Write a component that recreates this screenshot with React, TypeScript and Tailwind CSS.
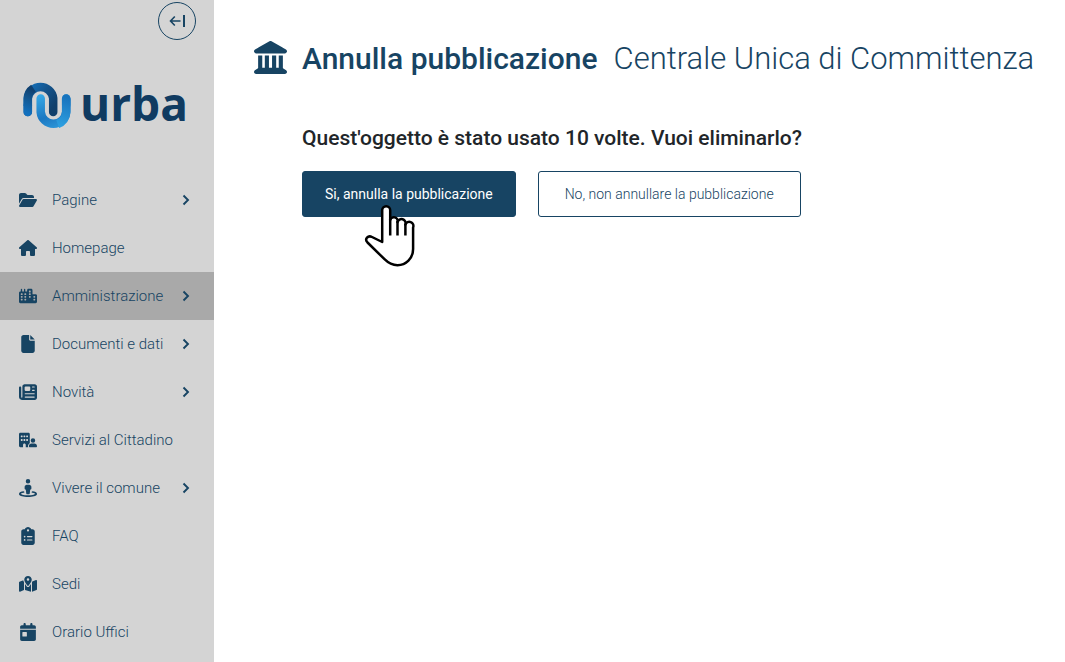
import type { ComponentType } from 'react'
import { clsx } from 'clsx'
import {
  FaBuildingUser,
  FaCalendarDay,
  FaCity,
  FaClipboardList,
  FaFile,
  FaFolderOpen,
  FaHouse,
  FaLandmark,
  FaMapLocationDot,
  FaNewspaper,
  FaStreetView,
} from 'react-icons/fa6'

interface NavItem {
  label: string
  icon: ComponentType<{ className?: string }>
  expandable?: boolean
  active?: boolean
}

const navItems: NavItem[] = [
  { label: 'Pagine', icon: FaFolderOpen, expandable: true },
  { label: 'Homepage', icon: FaHouse },
  { label: 'Amministrazione', icon: FaCity, expandable: true, active: true },
  { label: 'Documenti e dati', icon: FaFile, expandable: true },
  { label: 'Novità', icon: FaNewspaper, expandable: true },
  { label: 'Servizi al Cittadino', icon: FaBuildingUser },
  { label: 'Vivere il comune', icon: FaStreetView, expandable: true },
  { label: 'FAQ', icon: FaClipboardList },
  { label: 'Sedi', icon: FaMapLocationDot },
  { label: 'Orario Uffici', icon: FaCalendarDay },
]

export default function App() {
  return (
    <div className="flex min-h-screen bg-white font-['Roboto',sans-serif] text-[#174463]">
      <Sidebar />
      <main className="min-w-0 flex-1 pt-9 pl-10">
        <h1 className="flex items-center text-[31px] leading-[46px]">
          <FaLandmark className="mr-[15px] mb-1 size-[33px] shrink-0" />
          <span className="text-[30px] font-medium whitespace-nowrap">Annulla pubblicazione</span>
          <span className="ml-4 font-light whitespace-nowrap">Centrale Unica di Committenza</span>
        </h1>
        <div className="mt-10 ml-12">
          <h2 className="text-[21px] leading-8 font-medium text-[#212529]">
            Quest'oggetto è stato usato 10 volte. Vuoi eliminarlo?
          </h2>
          <div className="mt-[17px] flex gap-[22px]">
            <div className="relative">
              <button
                type="button"
                className="h-[46px] cursor-pointer rounded-[3px] border border-[#174463] bg-[#174463] px-[22px] text-sm whitespace-nowrap text-white"
              >
                Si, annulla la pubblicazione
              </button>
              <HandPointer className="pointer-events-none absolute top-[33px] left-[62px]" />
            </div>
            <button
              type="button"
              className="h-[46px] cursor-pointer rounded-[3px] border border-[#174463] bg-white px-[26px] text-sm font-light whitespace-nowrap"
            >
              No, non annullare la pubblicazione
            </button>
          </div>
        </div>
      </main>
    </div>
  )
}

function Sidebar() {
  return (
    <aside className="w-[214px] shrink-0 bg-[#d4d4d4]">
      <div className="flex justify-end pt-0.5 pr-[18px]">
        <button
          type="button"
          aria-label="Chiudi menu"
          className="flex size-[38px] cursor-pointer items-center justify-center rounded-full border border-[#174463]"
        >
          <svg width="16" height="14" viewBox="0 0 16 14" fill="none" stroke="currentColor">
            <path d="M5.8 2.5 1.5 7 5.8 11.5M1.5 7H11.5" strokeWidth="1.6" />
            <path d="M15 1V13" strokeWidth="2" />
          </svg>
        </button>
      </div>

      <a href="#" className="mt-[41px] flex h-12 items-start pl-[23px]">
        <LogoMark />
        <span className="ml-[9px] font-['Open_Sans',sans-serif] text-[46px] leading-11 font-bold text-[#103b61]">
          urba
        </span>
      </a>

      <nav className="mt-[47px]">
        {navItems.map((item) => (
          <SidebarLink key={item.label} item={item} />
        ))}
      </nav>
    </aside>
  )
}

function SidebarLink({ item }: { item: NavItem }) {
  const Icon = item.icon

  return (
    <a
      href="#"
      aria-current={item.active ? 'page' : undefined}
      className={clsx('flex h-12 items-center pr-6 pl-[19px]', item.active && 'bg-[#a9a9a9]')}
    >
      <Icon className="size-[18px] shrink-0" />
      <span className="ml-[15px] text-[15px] leading-6 font-light whitespace-nowrap">{item.label}</span>
      {item.expandable && (
        <svg className="ml-auto" width="8" height="12" viewBox="0 0 8 12" fill="none" stroke="currentColor" strokeWidth="1.9">
          <path d="M1.5 1.5 6 6l-4.5 4.5" />
        </svg>
      )}
    </a>
  )
}

function LogoMark() {
  return (
    <svg width="48" height="48" viewBox="0 0 48 48" fill="none" strokeWidth="8.5" strokeLinecap="round">
      <defs>
        <linearGradient id="arch" x1="6" y1="4" x2="32" y2="24" gradientUnits="userSpaceOnUse">
          <stop offset="0" stopColor="#1470ba" />
          <stop offset="0.5" stopColor="#14548c" />
          <stop offset="1" stopColor="#103f6b" />
        </linearGradient>
        <linearGradient id="archLeg" x1="3" y1="31" x2="12" y2="10" gradientUnits="userSpaceOnUse">
          <stop offset="0" stopColor="#1270bd" />
          <stop offset="0.6" stopColor="#13568f" />
          <stop offset="1" stopColor="#104170" />
        </linearGradient>
        <linearGradient id="cup" x1="18" y1="14" x2="30" y2="47" gradientUnits="userSpaceOnUse">
          <stop offset="0" stopColor="#35a8e6" />
          <stop offset="0.65" stopColor="#1c78c2" />
          <stop offset="1" stopColor="#2b93d6" />
        </linearGradient>
        <linearGradient id="cupLeg" x1="43" y1="16" x2="34" y2="44" gradientUnits="userSpaceOnUse">
          <stop offset="0" stopColor="#1773bd" />
          <stop offset="1" stopColor="#2d9fe0" />
        </linearGradient>
      </defs>
      <path d="M4.8 31V17.3a12.8 12.8 0 0 1 25.4 0V31" stroke="url(#arch)" />
      <path d="M4.8 31V24" stroke="url(#archLeg)" />
      <path d="M4.8 25v-7c0-4.5 2.2-8.4 5.7-10.7" stroke="url(#archLeg)" strokeLinecap="butt" />
      <path d="M17.7 17.5V31a12.8 12.8 0 0 0 25.5 0V17.5" stroke="url(#cup)" />
      <path d="M43.2 17.5V31c0 5.5-3.6 10.2-8.5 12" stroke="url(#cupLeg)" strokeLinecap="butt" />
      <path d="M43.2 17.5V24" stroke="url(#cupLeg)" />
    </svg>
  )
}

function HandPointer({ className }: { className?: string }) {
  return (
    <svg className={className} width="52" height="64" viewBox="0 0 52 64" fill="none" stroke="black" strokeWidth="2.5" strokeLinejoin="round">
      <path
        d="M18.2 38V6.2a4 4 0 0 1 8 0V16a3.7 3.7 0 0 1 7.3 2a3.9 3.9 0 0 1 7.9 2.5a3.9 3.9 0 0 1 7.7 3V45C49 54.5 42 61.2 33.5 61.2c-6 0-9.5-2.5-13-6L3.5 38.5C.2 35 4 31 8 33z"
        fill="white"
      />
      <path d="M26.2 15V31.5M33.5 17V31.5M41.4 19.5V31.5" />
    </svg>
  )
}
